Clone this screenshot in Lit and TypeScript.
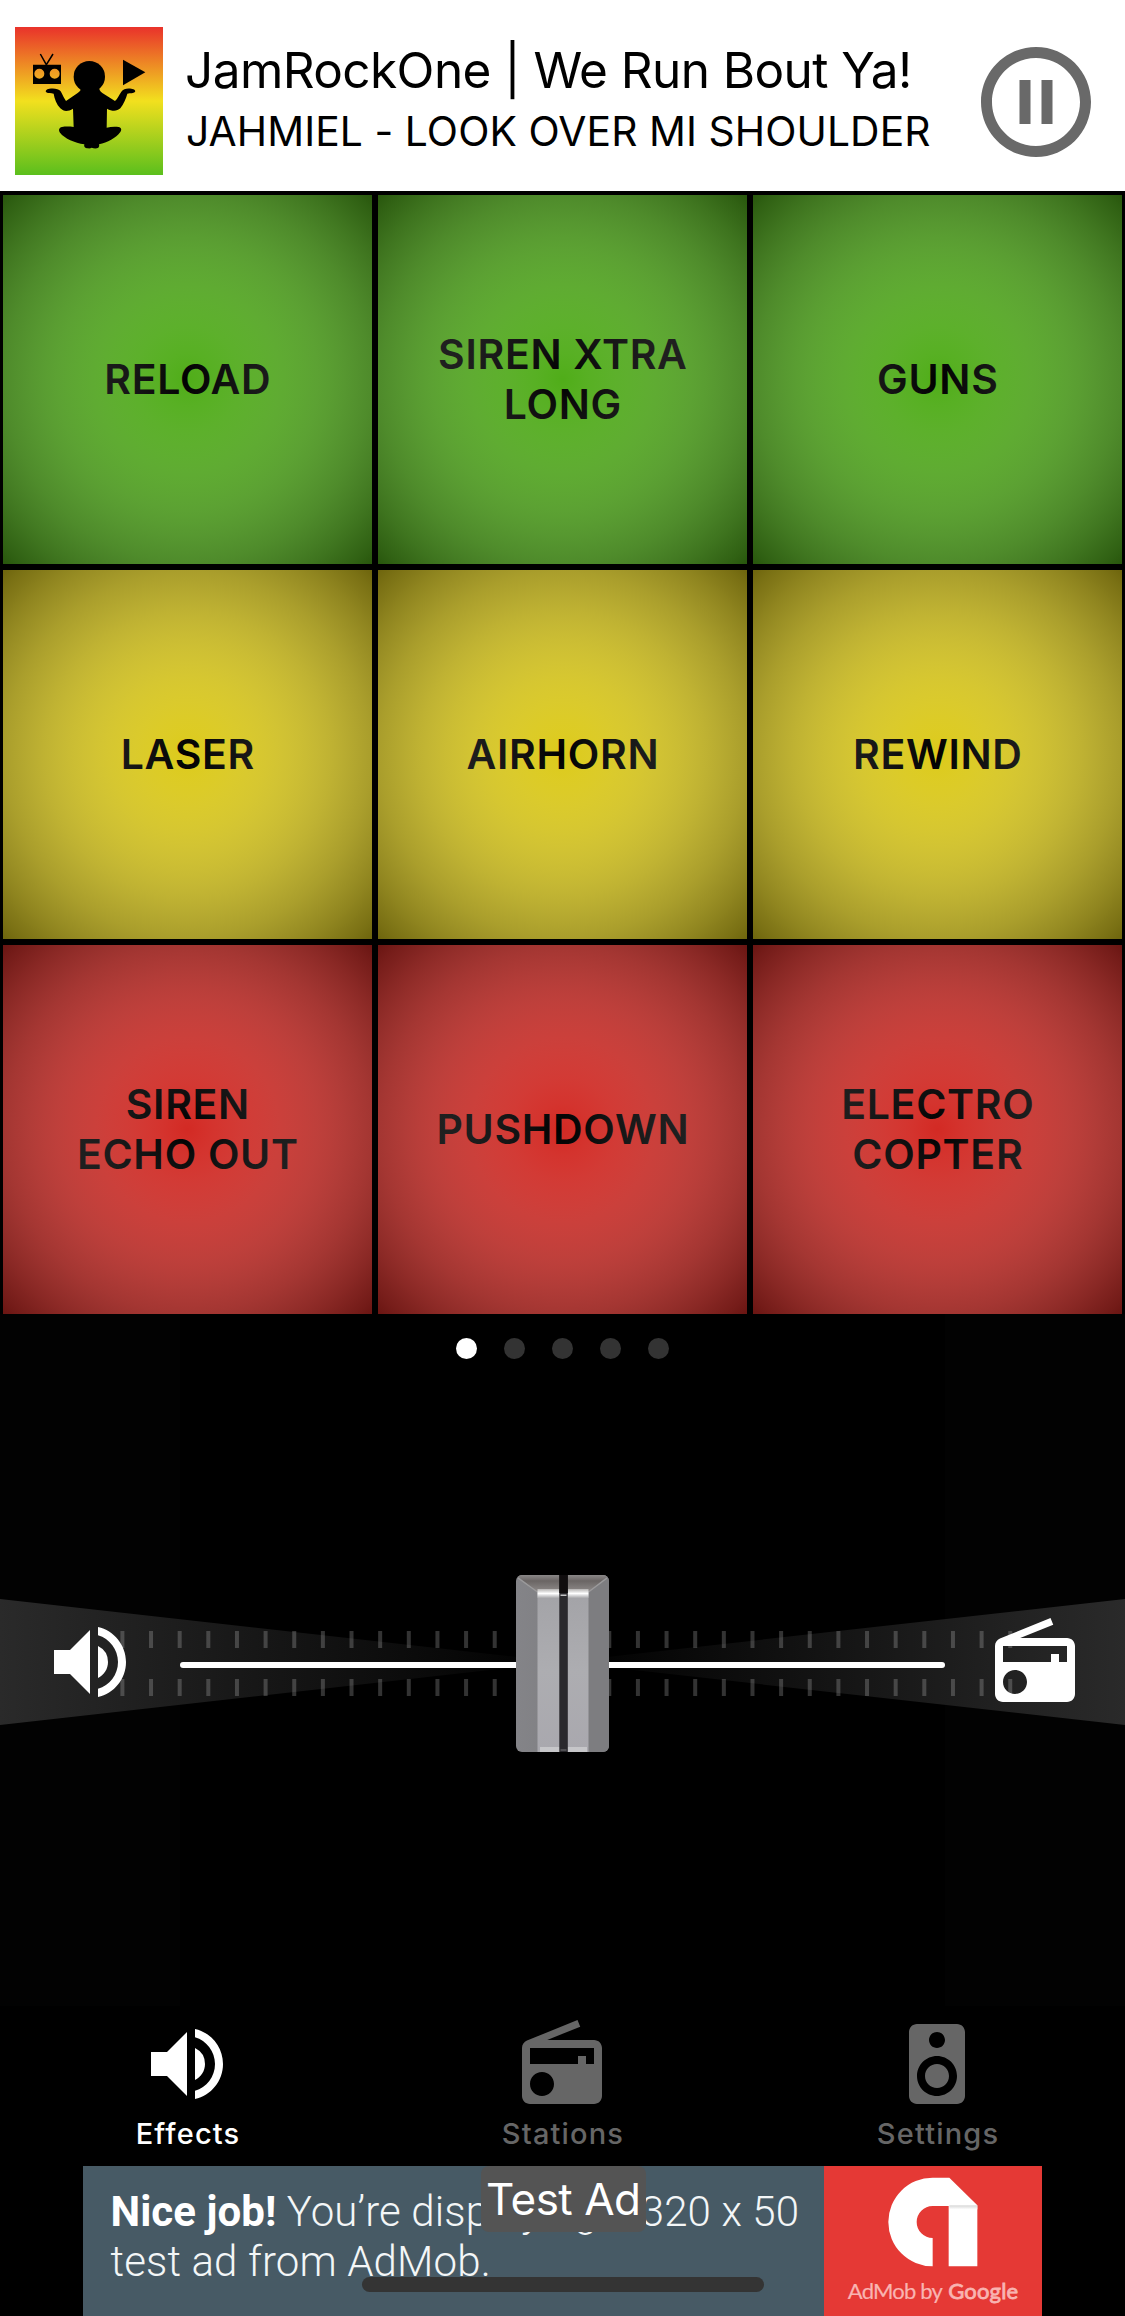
import { LitElement, html, css, svg, unsafeCSS } from "lit";
import { customElement, property, state } from "lit/decorators.js";
import { classMap } from "lit/directives/class-map.js";

type IconName = "volume" | "radio" | "speaker" | "pause";

const ICONS: Record<IconName, string> = {
  volume:
    "M3 9v6h4l5 5V4L7 9H3zm13.5 3A4.5 4.5 0 0 0 14 7.97v8.05c1.48-.73 2.5-2.25 2.5-4.02zM14 3.23v2.06c2.89.86 5 3.54 5 6.71s-2.11 5.85-5 6.71v2.06c4.01-.91 7-4.49 7-8.77s-2.99-7.86-7-8.77z",
  radio:
    "M3.24 6.15C2.51 6.43 2 7.17 2 8v12c0 1.1.89 2 2 2h16c1.11 0 2-.9 2-2V8c0-1.11-.89-2-2-2H8.3l8.26-3.34L15.88 1 3.24 6.15zM7 20c-1.66 0-3-1.34-3-3s1.34-3 3-3 3 1.34 3 3-1.34 3-3 3zm13-8h-2v-2h-2v2H4V8h16v4z",
  speaker:
    "M17 2H7c-1.1 0-2 .9-2 2v16c0 1.1.9 1.99 2 1.99L17 22c1.1 0 2-.9 2-2V4c0-1.1-.9-2-2-2zm-5 2c1.1 0 2 .9 2 2s-.9 2-2 2c-1.11 0-2-.9-2-2s.89-2 2-2zm0 16c-2.76 0-5-2.24-5-5s2.24-5 5-5 5 2.24 5 5-2.24 5-5 5zm0-8c-1.66 0-3 1.34-3 3s1.34 3 3 3 3-1.34 3-3-1.34-3-3-3z",
  pause:
    "M9 16h2V8H9v8zm3-14C6.48 2 2 6.48 2 12s4.48 10 10 10 10-4.48 10-10S17.52 2 12 2zm0 18c-4.41 0-8-3.59-8-8s3.59-8 8-8 8 3.59 8 8-3.59 8-8 8zm1-4h2V8h-2v8z",
};

const icon = (name: IconName) =>
  html`<svg class="icon" viewBox="0 0 24 24" fill="currentColor"><path d=${ICONS[name]}></path></svg>`;

/* Glow that runs from clear white in the middle to half-black in the corners. */
const glowStops = Array.from({ length: 21 }, (_, i) => {
  const t = i / 20;
  const v = Math.round(255 * (1 - t));
  return `rgba(${v},${v},${v},${(t / 2).toFixed(3)}) ${t * 100}%`;
}).join(",");

@customElement("now-playing")
class NowPlaying extends LitElement {
  @property() station = "";
  @property() track = "";

  static styles = css`
    :host {
      display: flex;
      align-items: center;
      box-sizing: border-box;
      height: 191px;
      padding: 11px 24px 0 15px;
      background: #fff;
      color: #000;
    }
    .art {
      width: 148px;
      height: 148px;
      flex: none;
    }
    .text {
      flex: 1;
      margin-left: 22px;
      white-space: nowrap;
      line-height: 61px;
    }
    .station {
      font-size: 49.5px;
      letter-spacing: -0.58px;
    }
    .track {
      margin-left: 1px;
      font-size: 40.8px;
      letter-spacing: 0.08px;
    }
    .icon {
      display: block;
      width: 132px;
      height: 132px;
      color: #696969;
      margin: 2px -1px 0 0;
    }
  `;

  render() {
    return html`
      <svg class="art" viewBox="45 81 444 444">
        <defs>
          <linearGradient id="flag" x1="0" y1="0" x2="0" y2="1">
            <stop offset="0" stop-color="#e9322b"></stop>
            <stop offset=".5" stop-color="#f2e01e"></stop>
            <stop offset="1" stop-color="#5bbf1d"></stop>
          </linearGradient>
        </defs>
        <rect x="45" y="81" width="444" height="444" fill="url(#flag)"></rect>
        <path d="M121 162L139 194L159 162" fill="none" stroke="#000" stroke-width="4.5"></path>
        <path
          fill-rule="evenodd"
          d="M99 194h84v58H99zM133 221a15 15 0 1 0-30 0a15 15 0 1 0 30 0zM179 221a15 15 0 1 0-30 0a15 15 0 1 0 30 0z"
        ></path>
        <path d="M369 179L436 216.500L369 256z"></path>
        <circle cx="268" cy="230" r="47"></circle>
        <path
          d="M243 262C244 270 240 274 233 279L198 303C191 294 188 284 182 274C176 265 160 264 148 266C139 267 135 273 139 277C144 281 153 279 161 281C163 296 170 313 181 325C191 335 204 335 219 326L221 381C208 379 196 379 186 381C177 383 175 390 180 398C194 416 224 428 253 433C251 441 256 445 263 445C268 446 272 445 275 443C282 446 290 446 295 443C298 440 298 436 297 433C322 427 348 414 361 396C366 389 364 383 356 381C345 379 332 380 320 383L321 326C337 335 351 334 361 325C371 313 378 295 382 281C391 279 400 281 405 276C408 271 403 267 394 266C382 264 370 266 364 275C356 287 353 296 345 303L307 279C300 274 298 270 297 262Z"
        ></path>
      </svg>
      <div class="text">
        <div class="station">${this.station}</div>
        <div class="track">${this.track}</div>
      </div>
      ${icon("pause")}
    `;
  }
}

interface Pad {
  lines: string[];
  tone: "green" | "yellow" | "red";
}

@customElement("pad-grid")
class PadGrid extends LitElement {
  @property({ attribute: false }) pads: Pad[] = [];

  static styles = css`
    :host {
      display: grid;
      grid-template-columns: repeat(3, 369px);
      grid-auto-rows: 369px;
      gap: 6px;
      padding: 4px 3px 0;
      background: #000;
    }
    .pad {
      position: relative;
      display: flex;
      flex-direction: column;
      align-items: center;
      justify-content: center;
      box-sizing: border-box;
      padding-bottom: 2px;
      color: #000;
      font-size: 41px;
      font-weight: 600;
      line-height: 50px;
      letter-spacing: 0.7px;
      text-indent: 0.7px;
    }
    .pad::after {
      content: "";
      position: absolute;
      inset: 0;
      background: radial-gradient(circle, ${unsafeCSS(glowStops)});
    }
    .green {
      background: #50ad19;
    }
    .yellow {
      background: #dcca1a;
    }
    .red {
      background: #d32a24;
    }
  `;

  render() {
    return this.pads.map(
      (p) => html`<div class=${classMap({ pad: true, [p.tone]: true })}>${p.lines.map((l) => html`<span>${l}</span>`)}</div>`
    );
  }
}

@customElement("cross-fader")
class CrossFader extends LitElement {
  static styles = css`
    :host {
      position: relative;
      display: flex;
      align-items: center;
      box-sizing: border-box;
      height: 177px;
      padding: 0 42px;
      color: #fff;
    }
    .scale {
      position: absolute;
      left: 0;
      top: 24px;
      width: 1125px;
      height: 126px;
    }
    .icon {
      position: relative;
      flex: none;
      width: 96px;
      height: 96px;
      margin-bottom: 3px;
    }
    .track {
      position: relative;
      flex: 1;
      height: 6px;
      margin: 3px 42px 0;
      border-radius: 3px;
      background: #fff;
    }
    .thumb {
      position: absolute;
      left: 336px;
      top: -87px;
      width: 93px;
      height: 177px;
    }
  `;

  render() {
    const ticks = Array.from({ length: 32 }, (_, i) => 122.4 + i * 28.64);
    return html`
      <svg class="scale" viewBox="0 0 1125 126">
        <defs>
          <linearGradient id="beam" gradientUnits="userSpaceOnUse" x1="0" x2="1125" y1="0" y2="0">
            <stop offset="0" stop-color="#2a2a2a"></stop>
            <stop offset=".5" stop-color="#000"></stop>
            <stop offset="1" stop-color="#2a2a2a"></stop>
          </linearGradient>
        </defs>
        <path d="M0 0L562 63L0 126zM1125 0L562 63L1125 126z" fill="url(#beam)"></path>
        ${ticks.map(
          (x) => svg`<path d="M${x - 2} 32h4v17h-4zM${x - 2} 80h4v17h-4z" fill="#fff" fill-opacity=".2"></path>`
        )}
      </svg>
      ${icon("volume")}
      <div class="track">
        <svg class="thumb" viewBox="0 0 93 177">
          <defs>
            <clipPath id="cap"><rect width="93" height="177" rx="6"></rect></clipPath>
            <linearGradient id="left" x1="0" x2="1" y1="0" y2="0">
              <stop offset="0" stop-color="#848488"></stop>
              <stop offset="1" stop-color="#79797c"></stop>
            </linearGradient>
            <linearGradient id="bevel" x1="0" x2="0" y1="0" y2="1">
              <stop offset="0" stop-color="#8a8787"></stop>
              <stop offset=".35" stop-color="#6a6564"></stop>
              <stop offset="1" stop-color="#8f8b8a"></stop>
            </linearGradient>
            <linearGradient id="face" x1="0" x2="0" y1="0" y2="1">
              <stop offset="0" stop-color="#a3a3a7"></stop>
              <stop offset=".5" stop-color="#adadb1"></stop>
              <stop offset="1" stop-color="#a9a8ae"></stop>
            </linearGradient>
            <linearGradient id="shine" x1="0" x2="0" y1="0" y2="1">
              <stop offset="0" stop-color="#b5b3b2"></stop>
              <stop offset=".5" stop-color="#fff"></stop>
              <stop offset="1" stop-color="#a8a8ab"></stop>
            </linearGradient>
          </defs>
          <g clip-path="url(#cap)">
            <rect width="93" height="177" fill="url(#left)"></rect>
            <rect x="72" width="21" height="177" fill="#7d7d80"></rect>
            <path d="M0 0H93L72.500 17H21.500z" fill="url(#bevel)"></path>
            <path d="M2 3L21.500 17M91 3L72.500 17" stroke="#9b9a9b" stroke-width="1.500"></path>
            <rect x="21.500" y="16" width="51" height="161" fill="url(#face)"></rect>
            <rect x="21.500" y="14" width="51" height="9" fill="url(#shine)"></rect>
            <rect x="24" y="172" width="47" height="5" fill="#c6c6c9"></rect>
            <rect x="43.300" width="8.500" height="177" fill="#2a292d"></rect>
            <rect x="43.300" width="8.500" height="18" fill="#100d0e"></rect>
            <rect x="44.500" y="19.500" width="6" height="1.500" fill="#c4c4c6"></rect>
            <rect x="44.500" y="174.500" width="6" height="1" fill="#77777a"></rect>
          </g>
        </svg>
      </div>
      ${icon("radio")}
    `;
  }
}

@customElement("tab-bar")
class TabBar extends LitElement {
  @state() private active = 0;

  static styles = css`
    :host {
      display: grid;
      grid-template-columns: repeat(3, 1fr);
      height: 160px;
      background: #000;
    }
    .tab {
      display: flex;
      flex-direction: column;
      align-items: center;
      padding-top: 10px;
      color: #666;
      font-size: 29px;
      font-weight: 500;
      line-height: 43px;
      letter-spacing: 1.17px;
      text-indent: 1px;
    }
    .on {
      color: #fff;
    }
    .icon {
      width: 96px;
      height: 96px;
      margin-right: 1px;
    }
  `;

  private tabs: [IconName, string][] = [
    ["volume", "Effects"],
    ["radio", "Stations"],
    ["speaker", "Settings"],
  ];

  render() {
    return this.tabs.map(
      ([name, label], i) => html`<div
        class=${classMap({ tab: true, on: i === this.active })}
        @click=${() => (this.active = i)}
      >
        ${icon(name)}<span>${label}</span>
      </div>`
    );
  }
}

@customElement("ad-banner")
class AdBanner extends LitElement {
  static styles = css`
    :host {
      position: relative;
      display: flex;
      justify-content: center;
      height: 150px;
      background: #000;
      overflow: hidden;
    }
    .copy {
      box-sizing: border-box;
      width: 741.3px;
      padding: 21px 0 0 28px;
      background: #475a65;
      color: #f3f6f7;
      font: 300 42px/50px Roboto, sans-serif;
      letter-spacing: 0.13px;
      white-space: nowrap;
    }
    .copy b {
      color: #fff;
      font-weight: 700;
      letter-spacing: 0.05px;
    }
    .brand {
      display: flex;
      flex-direction: column;
      align-items: center;
      gap: 9px;
      box-sizing: border-box;
      width: 218.7px;
      padding-top: 10.7px;
      background: #e53935;
    }
    .logo {
      width: 90px;
      height: 90px;
    }
    .by {
      display: flex;
      gap: 6px;
      color: #f9b4b1;
      font: 400 22px/30px Lato, sans-serif;
      letter-spacing: -0.8px;
      white-space: nowrap;
      -webkit-text-stroke: 0.2px #f9b4b1;
    }
    .by b {
      font-weight: 400;
      letter-spacing: 0.2px;
      -webkit-text-stroke: 0.8px #f9b4b1;
    }
    .badge {
      position: absolute;
      left: 480.5px;
      top: 0;
      width: 165.5px;
      border-radius: 8px;
      background: #545454;
      color: #fff;
      font-size: 44px;
      line-height: 66px;
      letter-spacing: -0.49px;
      text-align: center;
    }
    .home {
      position: absolute;
      left: 362px;
      bottom: 24px;
      width: 402px;
      height: 15px;
      border-radius: 7.5px;
      background: #343434;
    }
  `;

  render() {
    return html`
      <div class="copy"><b>Nice job!</b> You’re displaying a 320 x 50<br />test ad from AdMob.</div>
      <div class="brand">
        <svg class="logo" viewBox="746 560 270 270">
          <defs>
            <linearGradient id="fold" x1="0" x2="0" y1="0" y2="1">
              <stop offset="0" stop-color="#d6d6d6"></stop>
              <stop offset="1" stop-color="#fff"></stop>
            </linearGradient>
          </defs>
          <path
            fill="#fff"
            d="M880 562H930L1014 645V828H928V647H880A48 48 0 0 0 880 743V828A133 133 0 0 1 880 562z"
          ></path>
          <rect x="930" y="645" width="84" height="12" fill="url(#fold)"></rect>
        </svg>
        <div class="by"><span>AdMob by</span><b>Google</b></div>
      </div>
      <div class="badge">Test Ad</div>
      <div class="home"></div>
    `;
  }
}

@customElement("app-root")
class AppRoot extends LitElement {
  @state() private page = 0;

  private pads: Pad[] = [
    { lines: ["RELOAD"], tone: "green" },
    { lines: ["SIREN XTRA", "LONG"], tone: "green" },
    { lines: ["GUNS"], tone: "green" },
    { lines: ["LASER"], tone: "yellow" },
    { lines: ["AIRHORN"], tone: "yellow" },
    { lines: ["REWIND"], tone: "yellow" },
    { lines: ["SIREN", "ECHO OUT"], tone: "red" },
    { lines: ["PUSHDOWN"], tone: "red" },
    { lines: ["ELECTRO", "COPTER"], tone: "red" },
  ];

  static styles = css`
    :host {
      display: block;
      width: 1125px;
      height: 2316px;
      overflow: hidden;
      background: #000;
      font-family: Inter, "Liberation Sans", sans-serif;
    }
    .stage {
      box-sizing: border-box;
      height: 692px;
      background: linear-gradient(90deg, #020202 180px, #000 180px, #000 945px, #020202 945px);
    }
    .dots {
      display: flex;
      justify-content: center;
      gap: 27px;
      padding: 24px 0 216px;
    }
    .dot {
      width: 21px;
      height: 21px;
      border-radius: 50%;
      background: #333;
    }
    .current {
      background: #fff;
    }
  `;

  render() {
    return html`
      <now-playing station="JamRockOne | We Run Bout Ya!" track="JAHMIEL - LOOK OVER MI SHOULDER"></now-playing>
      <pad-grid .pads=${this.pads}></pad-grid>
      <div class="stage">
        <div class="dots">
          ${[0, 1, 2, 3, 4].map((i) => html`<span class=${classMap({ dot: true, current: i === this.page })}></span>`)}
        </div>
        <cross-fader></cross-fader>
      </div>
      <tab-bar></tab-bar>
      <ad-banner></ad-banner>
    `;
  }
}
